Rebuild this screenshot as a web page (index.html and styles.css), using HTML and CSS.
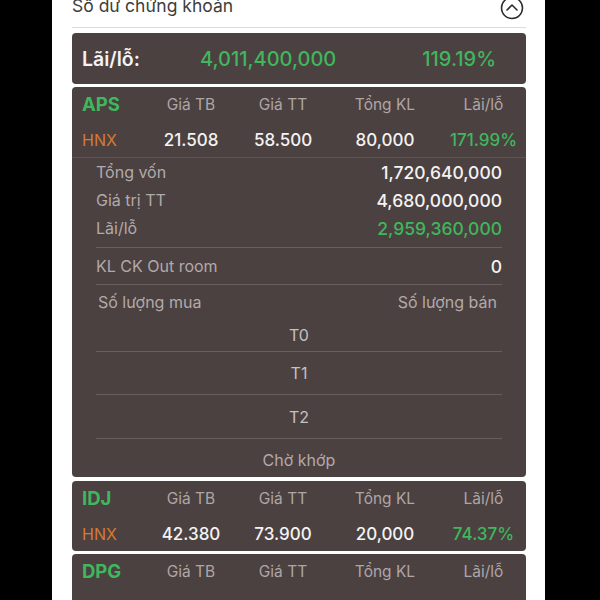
FILE: index.html
```html
<!DOCTYPE html>
<html lang="vi">
<head>
<meta charset="utf-8">
<link rel="stylesheet" href="styles.css">
</head>
<body>
<div class="screen">
  <div class="header">
    <span class="title">Số dư chứng khoán</span>
    <svg class="chev" width="24" height="24" viewBox="0 0 24 24"><circle cx="12" cy="12" r="10.5" fill="none" stroke="#2a2a2a" stroke-width="1.5"/><polyline points="7,14 12,9 17,14" fill="none" stroke="#2a2a2a" stroke-width="1.6" stroke-linecap="round" stroke-linejoin="round"/></svg>
  </div>

  <div class="card total">
    <span class="total-label">Lãi/lỗ:</span>
    <span class="total-value green">4,011,400,000</span>
    <span class="total-pct green">119.19%</span>
  </div>

  <div class="card stock">
    <div class="srow head">
      <span class="sym green">APS</span>
      <span class="lbl">Giá TB</span>
      <span class="lbl">Giá TT</span>
      <span class="lbl">Tổng KL</span>
      <span class="lbl">Lãi/lỗ</span>
    </div>
    <div class="srow vals">
      <span class="exch">HNX</span>
      <span class="val">21.508</span>
      <span class="val">58.500</span>
      <span class="val">80,000</span>
      <span class="val green">171.99%</span>
    </div>
    <div class="details">
      <div class="group">
        <div class="drow"><span class="dl">Tổng vốn</span><span class="dv">1,720,640,000</span></div>
        <div class="drow"><span class="dl">Giá trị TT</span><span class="dv">4,680,000,000</span></div>
        <div class="drow"><span class="dl">Lãi/lỗ</span><span class="dv green">2,959,360,000</span></div>
      </div>
      <div class="drow out"><span class="dl">KL CK Out room</span><span class="dv">0</span></div>
      <div class="drow qty"><span class="dl">Số lượng mua</span><span class="dl">Số lượng bán</span></div>
      <div class="trow t0">T0</div>
      <div class="trow t1">T1</div>
      <div class="trow t2">T2</div>
      <div class="trow wait">Chờ khớp</div>
    </div>
  </div>

  <div class="card stock">
    <div class="srow head">
      <span class="sym green">IDJ</span>
      <span class="lbl">Giá TB</span>
      <span class="lbl">Giá TT</span>
      <span class="lbl">Tổng KL</span>
      <span class="lbl">Lãi/lỗ</span>
    </div>
    <div class="srow vals">
      <span class="exch">HNX</span>
      <span class="val">42.380</span>
      <span class="val">73.900</span>
      <span class="val">20,000</span>
      <span class="val green">74.37%</span>
    </div>
  </div>

  <div class="card stock last">
    <div class="srow head">
      <span class="sym green">DPG</span>
      <span class="lbl">Giá TB</span>
      <span class="lbl">Giá TT</span>
      <span class="lbl">Tổng KL</span>
      <span class="lbl">Lãi/lỗ</span>
    </div>
    <div class="srow vals">
      <span class="exch">HNX</span>
      <span class="val">40.000</span>
      <span class="val">45.000</span>
      <span class="val">10,000</span>
      <span class="val green">12.50%</span>
    </div>
  </div>
</div>
</body>
</html>
```

FILE: styles.css
```css
html, body {
  margin: 0;
  padding: 0;
  background: #000;
}
body {
  width: 600px;
  height: 600px;
  overflow: hidden;
  font-family: Inter, "Liberation Sans", Arial, sans-serif;
}
.screen {
  margin-left: 52px;
  width: 493px;
  height: 600px;
  background: #fff;
  padding: 0 19px 0 20px;
  box-sizing: border-box;
  overflow: hidden;
}
.header {
  margin-top: -12px;
  height: 40px;
  border-bottom: 1px solid #dcdcdc;
  display: flex;
  justify-content: space-between;
  align-items: center;
  box-sizing: border-box;
  padding-right: 2px;
}
.title {
  font-size: 17.5px;
  color: #3d3d3d;
  line-height: 28px;
  margin-top: -3px;
}
.chev {
  display: block;
  margin-top: 1px;
}
.card {
  background: #4b4141;
  border-radius: 4px;
  color: #f4f2f2;
}
.green { color: #3fb75c; }
.total {
  margin-top: 5px;
  height: 51px;
  display: grid;
  grid-template-columns: 118px 1fr auto;
  align-items: center;
  padding: 0 30px 0 10px;
}
.total-label {
  font-size: 19.5px;
  font-weight: 600;
}
.total-value, .total-pct {
  font-size: 20px;
  font-weight: 500;
}
.stock {
  margin-top: 3px;
}
.stock + .stock { margin-top: 4px; }
.stock.last { margin-top: 3px; }
.srow {
  display: grid;
  grid-template-columns: 63px 92px 92px 112px 85px;
  padding-left: 10px;
  align-items: center;
  text-align: center;
}
.srow.head { height: 32px; padding-top: 1px; }
.srow.vals { height: 37px; padding-top: 2px; box-sizing: border-box; }
.sym {
  text-align: left;
  font-size: 18.5px;
  font-weight: 700;
}
.exch {
  text-align: left;
  color: #d47a34;
  font-size: 16px;
}
.lbl {
  color: #aea6a6;
  font-size: 15.5px;
}
.val {
  font-size: 17px;
  font-weight: 500;
}
.details {
  border-top: 1px solid #5e5454;
  padding: 0 24px;
}
.group {
  border-bottom: 1px solid #685e5e;
  padding-bottom: 5px;
}
.drow {
  display: flex;
  justify-content: space-between;
  align-items: center;
  height: 28px;
}
.dl {
  color: #b2aaaa;
  font-size: 16px;
}
.dv {
  font-size: 17.5px;
  font-weight: 500;
}
.drow.out {
  height: 36px;
  border-bottom: 1px solid #685e5e;
}
.drow.qty {
  height: 33px;
  padding: 0 5px 0 2px;
}
.trow {
  text-align: center;
  color: #c6c0c0;
  font-size: 16px;
  display: flex;
  align-items: center;
  justify-content: center;
}
.t0 { height: 33px; border-bottom: 1px solid #685e5e; }
.t1 { height: 42px; border-bottom: 1px solid #685e5e; }
.t2 { height: 43px; border-bottom: 1px solid #685e5e; }
.wait { height: 38px; padding-top: 3px; box-sizing: border-box; color: #b2aaaa; }
```
